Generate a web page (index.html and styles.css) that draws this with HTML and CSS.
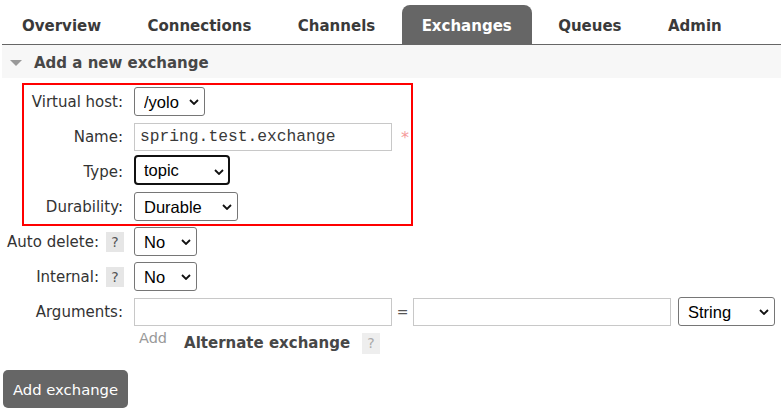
FILE: index.html
```html
<!DOCTYPE html>
<html>
<head>
<meta charset="utf-8">
<link rel="stylesheet" href="styles.css">
</head>
<body>
<div class="page">
  <nav class="tabs">
    <a class="tab">Overview</a>
    <a class="tab">Connections</a>
    <a class="tab">Channels</a>
    <a class="tab active">Exchanges</a>
    <a class="tab">Queues</a>
    <a class="tab">Admin</a>
  </nav>
  <section class="section">
    <h2 class="section-head"><span class="tri"></span>Add a new exchange</h2>
    <form class="form">
      <label class="lbl">Virtual host:</label>
      <div class="ctl">
        <span class="sel"><select class="w-yolo"><option>/yolo</option></select><svg width="10" height="6" viewBox="0 0 10 6"><path d="M1 1 L5 5 L9 1" fill="none" stroke="#111" stroke-width="1.8"/></svg></span>
      </div>

      <label class="lbl">Name:</label>
      <div class="ctl">
        <input class="txt mono" type="text" value="spring.test.exchange"><span class="req">*</span>
      </div>

      <label class="lbl">Type:</label>
      <div class="ctl">
        <span class="sel"><select class="w-topic focus"><option>topic</option></select><svg width="10" height="6" viewBox="0 0 10 6"><path d="M1 1 L5 5 L9 1" fill="none" stroke="#111" stroke-width="1.8"/></svg></span>
      </div>

      <label class="lbl">Durability:</label>
      <div class="ctl">
        <span class="sel"><select class="w-durable"><option>Durable</option></select><svg width="10" height="6" viewBox="0 0 10 6"><path d="M1 1 L5 5 L9 1" fill="none" stroke="#111" stroke-width="1.8"/></svg></span>
      </div>

      <label class="lbl">Auto delete:<span class="help">?</span></label>
      <div class="ctl">
        <span class="sel"><select class="w-no"><option>No</option></select><svg width="10" height="6" viewBox="0 0 10 6"><path d="M1 1 L5 5 L9 1" fill="none" stroke="#111" stroke-width="1.8"/></svg></span>
      </div>

      <label class="lbl">Internal:<span class="help">?</span></label>
      <div class="ctl">
        <span class="sel"><select class="w-no"><option>No</option></select><svg width="10" height="6" viewBox="0 0 10 6"><path d="M1 1 L5 5 L9 1" fill="none" stroke="#111" stroke-width="1.8"/></svg></span>
      </div>

      <label class="lbl">Arguments:</label>
      <div class="ctl">
        <input class="txt" type="text"><span class="eq">=</span><input class="txt" type="text">
        <span class="sel sel-str"><select class="w-string"><option>String</option></select><svg width="10" height="6" viewBox="0 0 10 6"><path d="M1 1 L5 5 L9 1" fill="none" stroke="#111" stroke-width="1.8"/></svg></span>
      </div>

      <span></span>
      <div class="ctl extra">
        <span class="add">Add</span>
        <span class="alt">Alternate exchange</span>
        <span class="help light">?</span>
      </div>
    </form>
    <button class="btn" type="button">Add exchange</button>
  </section>
  <div class="annot"></div>
</div>
</body>
</html>
```

FILE: styles.css
```css
html, body {
  margin: 0;
  padding: 0;
  background: #fff;
}
body {
  font-family: "DejaVu Sans", Verdana, sans-serif;
  color: #333;
}
.page {
  position: relative;
  width: 781px;
  height: 414px;
  overflow: hidden;
}
.tabs {
  display: flex;
  margin-left: 2px;
  padding-top: 5px;
  height: 39px;
  border-bottom: 1px solid #666;
}
.tab {
  display: block;
  padding: 3px 20px 0;
  margin-right: 6.4px;
  height: 36px;
  line-height: 36px;
  font-size: 15px;
  font-weight: bold;
  color: #3a3a3a;
}
.tab.active {
  background: #666;
  color: #fff;
  border-radius: 8px 8px 0 0;
}
.section {
  margin-left: 2px;
}
.section-head {
  margin: 0;
  box-sizing: border-box;
  height: 33px;
  padding-top: 2px;
  background: #f7f7f7;
  display: flex;
  align-items: center;
  font-size: 15px;
  font-weight: bold;
  color: #474747;
  padding-left: 8px;
}
.tri {
  width: 0;
  height: 0;
  border-left: 6px solid transparent;
  border-right: 6px solid transparent;
  border-top: 6px solid #999;
  margin-right: 12px;
}
.form {
  display: grid;
  grid-template-columns: 123px max-content;
  column-gap: 11px;
  row-gap: 6px;
  padding-top: 9px;
  margin-left: -2px;
}
.lbl {
  display: flex;
  align-items: center;
  justify-content: flex-end;
  height: 29px;
  font-size: 15px;
  color: #333;
  white-space: nowrap;
}
.ctl {
  display: flex;
  align-items: center;
  height: 29px;
}
.help {
  display: inline-block;
  width: 18px;
  height: 20px;
  line-height: 20px;
  text-align: center;
  background: #e6e6e6;
  color: #555;
  font-size: 14px;
  margin-left: 7px;
  margin-right: -1px;
}
.help.light {
  background: #eee;
  color: #aaa;
  height: 21px;
  line-height: 21px;
  margin-left: 12px;
}
.sel {
  position: relative;
  display: inline-block;
  height: 29px;
}
.sel select {
  -webkit-appearance: none;
  appearance: none;
  box-sizing: border-box;
  height: 29px;
  margin: 0;
  padding: 0 20px 0 9px;
  border: 1px solid #767676;
  border-radius: 3px;
  background: #fff;
  color: #000;
  font-family: "Liberation Sans", Arial, sans-serif;
  font-size: 16.5px;
}
.sel svg {
  position: absolute;
  right: 6px;
  top: 12px;
  pointer-events: none;
}
.sel select.focus {
  border: 2px solid #111;
  border-radius: 4px;
  height: 30px;
  padding-left: 8px;
  margin-top: -2px;
}
.w-yolo { width: 71px; }
.w-topic { width: 96px; }
.w-durable { width: 104px; }
.w-no { width: 63px; }
.w-string { width: 97px; }
.sel-str { margin-left: 7px; }
.txt {
  box-sizing: border-box;
  width: 258px;
  height: 28px;
  margin: 0;
  padding: 0 5px;
  border: 1px solid #c8c8c8;
  background: #fff;
  font-family: "Liberation Sans", Arial, sans-serif;
  font-size: 16px;
  color: #333;
}
.mono {
  font-family: "Liberation Mono", "Courier New", monospace;
  font-size: 16.3px;
  color: #3a3a3a;
}
.req {
  color: #f59a9a;
  font-size: 16px;
  margin-left: 9px;
  margin-top: 2px;
}
.eq {
  width: 21px;
  text-align: center;
  font-size: 14px;
  color: #555;
}
.extra {
  height: 26px;
  margin-top: -2px;
}
.add {
  font-size: 14.5px;
  color: #999;
  margin-left: 5px;
  margin-top: -11px;
}
.alt {
  font-size: 15px;
  font-weight: bold;
  color: #474747;
  margin-left: 17px;
}
.btn {
  display: block;
  margin: 14px 0 0 1px;
  width: 125px;
  height: 38px;
  border: 0;
  border-radius: 5px;
  background: #666;
  color: #fff;
  font-family: "DejaVu Sans", Verdana, sans-serif;
  font-size: 14.8px;
  padding: 0;
}
.annot {
  position: absolute;
  left: 22px;
  top: 83px;
  width: 391px;
  height: 143px;
  box-sizing: border-box;
  border: 2px solid #f00;
  pointer-events: none;
}
```
